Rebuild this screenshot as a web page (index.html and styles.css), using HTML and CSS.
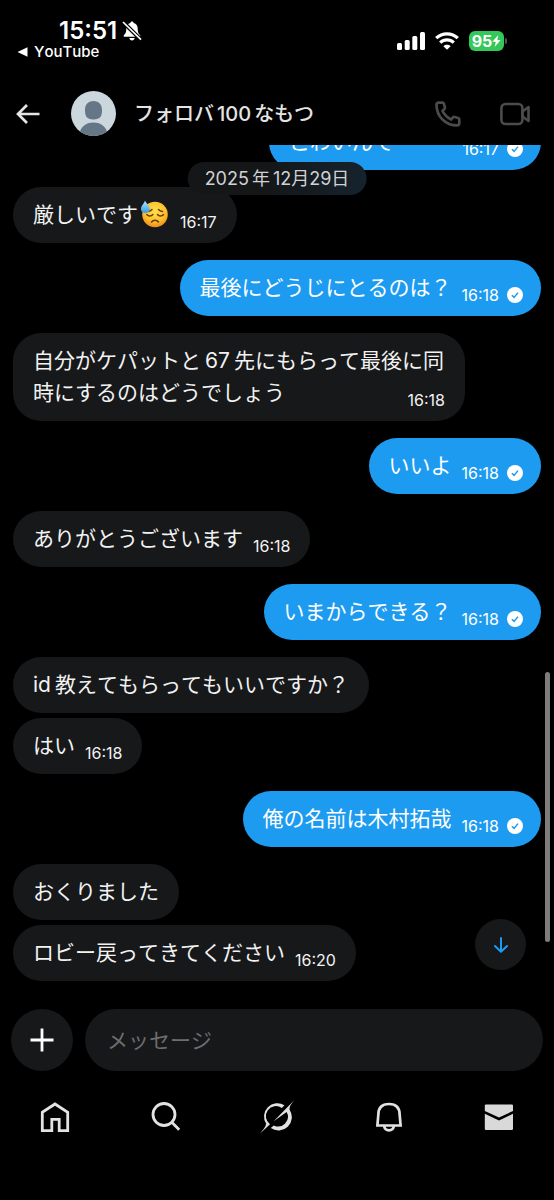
FILE: index.html
```html
<!DOCTYPE html>
<html lang="ja">
<head>
<meta charset="utf-8">
<meta name="viewport" content="width=device-width, initial-scale=1">
<title>フォロバ100なもつ</title>
<link rel="stylesheet" href="styles.css">
</head>
<body>
<svg width="0" height="0" class="defs" aria-hidden="true">
  <symbol id="check" viewBox="0 0 16 16"><circle cx="8" cy="8" r="8" fill="#fff"/><path d="M4.900 8.200 7.100 10.400 11 5.600" fill="none" stroke="#1d9bf0" stroke-width="1.500"/></symbol>
</svg>
<div class="app">
  <div class="status">
    <div class="status-left">
      <div class="clock">15:51
        <svg width="20" height="20" viewBox="0 0 20 20" aria-label="消音"><path d="M10 .6c1 0 1.600.6 1.700 1.500 2.700.7 4 2.800 4 5.300 0 4 .9 5.100 2.300 6.500.6.700.3 1.900-.7 1.900H2.700c-1 0-1.300-1.200-.7-1.900C3.400 12.500 4.300 11.400 4.300 7.400c0-2.500 1.300-4.600 4-5.300C8.400 1.200 9 .6 10 .6zM7.300 17h5.400c-.3 1.500-1.300 2.400-2.700 2.400S7.600 18.500 7.300 17z" fill="#fff"/><path d="M1.500 1.500 18.800 18.500" stroke="#000" stroke-width="4"/><path d="M1 1 19 18.700" stroke="#fff" stroke-width="1.700"/></svg>
      </div>
      <a class="back-app" href="#"><svg width="11" height="10" viewBox="0 0 11 10"><path d="M.5 5 10.500.3v9.400z" fill="#fff"/></svg>YouTube</a>
    </div>
    <div class="status-right">
      <svg width="28" height="18" viewBox="0 0 28 18" fill="#fff" aria-label="電波"><rect y="11" width="5" height="7" rx="1.500"/><rect x="7.700" y="8" width="5" height="10" rx="1.500"/><rect x="15.300" y="4" width="5" height="14" rx="1.500"/><rect x="23" width="5" height="18" rx="1.500"/></svg>
      <svg width="24" height="18" viewBox="0 0 24 18" fill="none" stroke="#fff" stroke-width="3.200" aria-label="Wi-Fi"><path d="M1.200 6.200C7.200.3 16.800.3 22.800 6.200"/><path d="M5.200 10.600c3.900-3.700 9.700-3.700 13.600 0"/><path d="M12 17.800 8.400 14.200c2-1.900 5.200-1.900 7.200 0z" fill="#fff" stroke="none"/></svg>
      <div class="battery"><span>95</span><svg width="9" height="12" viewBox="0 0 9 12"><path d="M6.300 0 .3 6.700h3.500L2.600 12 8.700 4.900H5.300z" fill="#fff"/></svg></div>
    </div>
  </div>

  <header class="header">
    <button class="icon-btn" aria-label="戻る"><svg width="24" height="20" viewBox="0 0 24 20" fill="none" stroke="#e4e4e4" stroke-width="2.700"><path d="M11 1 2 10l9 9M2 10h21.500"/></svg></button>
    <svg class="avatar" width="45" height="45" viewBox="0 0 45 45" aria-label="プロフィール画像"><clipPath id="av"><circle cx="22.500" cy="22.500" r="22.500"/></clipPath><g clip-path="url(#av)"><path fill="#ccd6dd" d="M0 0h45v45H0z"/><path d="M22.500 10c5.500 0 8.500 3.500 8.500 9 0 6-1.500 9.500-8.500 9.500S14 25 14 19c0-5.500 3-9 8.500-9zM8 45c1-9 6.500-13.500 14.500-13.500S36 36 37 45z" fill="#657786"/></g></svg>
    <h1 class="title">フォロバ<span class="latin-gap">100</span>なもつ</h1>
    <button class="icon-btn" aria-label="通話"><svg width="26" height="26" viewBox="0 0 26 26" fill="none" stroke="#4b4b4b" stroke-width="2.700" stroke-linejoin="round"><path d="M3.600 1.700h3.800c.8 0 1.300.4 1.500 1.100l1 3.600c.2.700 0 1.300-.6 1.800L7.500 9.800c1.900 3.900 4.800 6.800 8.700 8.700l1.700-2c.5-.5 1.100-.7 1.700-.5l3.600 1c.7.2 1.100.8 1.100 1.500v3.800c0 1.200-1 2.100-2.200 2.100C10.500 24.400 1.600 15.500 1.500 3.900c0-1.200.9-2.200 2.100-2.200z"/></svg></button>
    <button class="icon-btn" aria-label="ビデオ通話"><svg width="30" height="24" viewBox="0 0 30 24" fill="none" stroke="#4b4b4b" stroke-width="2.600" stroke-linejoin="round"><rect x="1.400" y="2" width="21" height="20" rx="4"/><path d="M22.500 9.500 28.500 5v14l-6-4.500z"/></svg></button>
  </header>

  <main class="chat">
    <div class="messages">
      <div class="bubble sent wide"><p>こわいんで</p><time>16:17</time><svg class="check"><use href="#check"/></svg></div>
      <div class="bubble"><p>厳しいです<svg class="emoji" viewBox="0 0 28 28" aria-label="😓"><defs><radialGradient id="face" cx=".5" cy=".35" r=".65"><stop offset="0" stop-color="#ffe04a"/><stop offset=".65" stop-color="#fdc02c"/><stop offset="1" stop-color="#ee8b18"/></radialGradient><linearGradient id="drop" x2="0" y2="1"><stop stop-color="#b5e8ff"/><stop offset="1" stop-color="#2f9be8"/></linearGradient></defs><circle cx="15" cy="14.500" r="12.800" fill="url(#face)"/><g fill="none" stroke="#6b3a10" stroke-width="1.500" stroke-linecap="round"><path d="M6.800 14.500c1.500 2 4.500 2 6 0M17.500 14.500c1.500 2 4.500 2 6 0M11.500 22c1.800-2.500 5.200-2.500 7 0M8 11.500c1.500-.2 3-.9 4-2M22.500 11.500c-1.500-.2-3-.9-4-2"/></g><path d="M5 .5c1 3 4.700 5 4.700 8.500 0 2.500-2 4-4.400 4S1 11.500 1 9C1 5.500 4.500 3.500 5 .5z" fill="url(#drop)"/></svg></p><time>16:17</time></div>
      <div class="bubble sent"><p>最後にどうじにとるのは？</p><time>16:18</time><svg class="check"><use href="#check"/></svg></div>
      <div class="bubble multiline"><p>自分がケパットと<span class="latin">67</span>先にもらって最後に同時にするのはどうでしょう<time>16:18</time></p></div>
      <div class="bubble sent"><p>いいよ</p><time>16:18</time><svg class="check"><use href="#check"/></svg></div>
      <div class="bubble"><p>ありがとうございます</p><time>16:18</time></div>
      <div class="bubble sent"><p>いまからできる？</p><time>16:18</time><svg class="check"><use href="#check"/></svg></div>
      <div class="bubble"><p>id<span class="after-latin">教</span>えてもらってもいいですか？</p></div>
      <div class="bubble grouped"><p>はい</p><time>16:18</time></div>
      <div class="bubble sent"><p>俺の名前は木村拓哉</p><time>16:18</time><svg class="check"><use href="#check"/></svg></div>
      <div class="bubble"><p>おくりました</p></div>
      <div class="bubble grouped"><p>ロビー戻ってきてください</p><time>16:20</time></div>
    </div>
    <div class="date-pill">2025<span class="latin-gap">年</span>12月29日</div>
    <div class="scroll-thumb"></div>
    <button class="to-bottom" aria-label="最新へ"><svg width="14" height="16" viewBox="0 0 14 16" fill="none" stroke="#1d9bf0" stroke-width="2" stroke-linecap="round" stroke-linejoin="round"><path d="M7 1v13.500M1 9l6 5.700L13 9"/></svg></button>
  </main>

  <form class="composer">
    <button type="button" class="add" aria-label="追加"><svg width="24" height="24" viewBox="0 0 24 24" stroke="#fff" stroke-width="2.800"><path d="M12 .5v23M.5 12h23"/></svg></button>
    <input class="field" type="text" placeholder="メッセージ" aria-label="メッセージ">
  </form>

  <nav class="tabs">
    <a href="#" aria-label="ホーム"><svg width="30" height="32" viewBox="0 0 30 32" fill="none" stroke="#e2e2e2" stroke-width="2.800"><path d="M2.300 11.200 15 3l12.700 8.200v18.500h-8.500V18.400h-7.400v11.300H2.300z"/></svg></a>
    <a href="#" aria-label="検索"><svg width="30" height="32" viewBox="0 0 30 32" fill="none" stroke="#e2e2e2" stroke-width="2.800"><circle cx="13" cy="13.500" r="11"/><path d="m20.800 21.300 7.400 7.400"/></svg></a>
    <a href="#" aria-label="Grok"><svg width="36" height="36" viewBox="0 0 36 36" fill="#e2e2e2"><path d="M25.500 6.300A13.300 13.300 0 0 0 7.200 24.800C6.800 28 3.500 31.500.8 34.800L11 25.200A9.700 9.700 0 0 1 22.800 9z"/><path d="M35.200 1.200 14.700 22.200 27.600 13A9.700 9.700 0 0 1 14.800 26.400L11.800 29A13.300 13.300 0 0 0 30.600 10.800C30 8 32 5 35.200 1.200z"/></svg></a>
    <a href="#" aria-label="通知"><svg width="30" height="32" viewBox="0 0 30 32" fill="none" stroke="#e2e2e2" stroke-width="2.700"><path d="M5.300 14C5.300 6.500 9.500 3 16 3s10.700 3.500 10.700 11l.9 10.500H4.400zM11 25c.7 3 2.400 4.300 5 4.300s4.300-1.300 5-4.300"/></svg></a>
    <a href="#" aria-label="メッセージ"><svg width="30" height="32" viewBox="0 0 30 32" fill="#d9d9d9"><path d="M2 3.500h26q1 0 1 1v5.500L15 16.500.8 10V4.500q0-1 1.200-1z"/><path d="M.8 12.800 15 19.400l14-6.600v14.900q0 1.300-1.300 1.300H2.100q-1.300 0-1.300-1.300z"/></svg></a>
  </nav>
</div>
</body>
</html>
```
FILE: styles.css
```css
* { box-sizing: border-box; }
body {
  margin: 0;
  background: #000;
  color: #f2f2f2;
  font-family: Inter, "Noto Sans CJK JP", sans-serif;
  font-kerning: none;
}
p, h1 { margin: 0; }
button { border: 0; padding: 0; background: none; font: inherit; color: inherit; }
a { color: inherit; text-decoration: none; }
svg { display: block; flex: none; }
.defs { position: absolute; }

.app { display: flex; flex-direction: column; height: 100vh; }

.status {
  display: flex;
  justify-content: space-between;
  align-items: flex-start;
  padding: 18px 50px 0 17px;
}
.clock {
  display: flex;
  align-items: center;
  gap: 5px;
  padding-left: 42px;
  font-size: 24px;
  line-height: 26px;
  font-weight: 600;
  color: #fff;
}
.back-app {
  display: flex;
  align-items: center;
  gap: 6px;
  font-size: 15px;
  line-height: 16px;
  font-weight: 500;
  color: #fff;
}
.status-right { display: flex; align-items: center; gap: 10px; padding-top: 13px; }
.battery {
  position: relative;
  display: flex;
  align-items: center;
  justify-content: center;
  width: 35px;
  height: 20px;
  border-radius: 6px;
  background: #34c759;
  color: #fff;
  font-size: 16px;
  font-weight: 700;
}
.battery::after {
  content: "";
  position: absolute;
  left: 36px;
  top: 7px;
  width: 2px;
  height: 6px;
  border-radius: 0 2px 2px 0;
  background: #555;
}

.header {
  display: flex;
  align-items: center;
  padding: 31px 24px 9px 16px;
}
.icon-btn { display: flex; justify-content: center; align-items: center; }
.avatar { margin-left: 31px; }
.title {
  flex: 1;
  margin-left: 18px;
  font-size: 20px;
  line-height: 24px;
  font-weight: 500;
  color: #e4e4e4;
}
.title + .icon-btn { margin-right: 39px; }

.chat {
  position: relative;
  flex: 1;
  min-height: 0;
  overflow: hidden;
  display: flex;
  flex-direction: column;
  justify-content: flex-end;
}
.messages {
  display: flex;
  flex-direction: column;
  align-items: flex-start;
  padding: 0 13px 28px;
}
.bubble {
  display: flex;
  align-items: flex-end;
  gap: 10px;
  max-width: 452px;
  margin-top: 17px;
  padding: 12px 20px;
  border-radius: 28px;
  background: #16181a;
  font-size: 21px;
  line-height: 32px;
}
.bubble.grouped { margin-top: 5px; }
.bubble.sent {
  align-self: flex-end;
  padding-right: 18px;
  background: #1d9bf0;
  color: #fff;
}
.bubble.wide { min-width: 272px; }
.wide time { margin-left: auto; }
.bubble time { font-size: 16px; line-height: 18px; }
.multiline time { float: right; margin-top: 14px; }
.check { width: 16px; height: 18px; margin-left: -2px; }
.emoji { display: inline-block; width: 28px; height: 28px; margin: 0 2px; vertical-align: -6px; }
.latin { margin: 0 4px; }
.after-latin { margin-left: 4px; }
.latin-gap { margin: 0 3px; }

.date-pill {
  position: absolute;
  top: 17px;
  left: 50%;
  transform: translateX(-50%);
  padding: 0 17px;
  border-radius: 17px;
  background: linear-gradient(90deg, #141617 40%, #15232e);
  color: #d0d3d5;
  font-size: 18px;
  line-height: 33px;
  white-space: nowrap;
}
.scroll-thumb {
  position: absolute;
  right: 4px;
  bottom: 67px;
  width: 5px;
  height: 270px;
  border-radius: 3px;
  background: #7d7d7d;
}
.to-bottom {
  position: absolute;
  right: 28px;
  bottom: 39px;
  display: flex;
  align-items: center;
  justify-content: center;
  width: 51px;
  height: 51px;
  border-radius: 50%;
  background: #16181a;
}

.composer { display: flex; gap: 12px; padding: 0 11px; }
.add {
  display: flex;
  flex: none;
  align-items: center;
  justify-content: center;
  width: 62px;
  height: 62px;
  border-radius: 50%;
  background: #16181a;
}
.field {
  flex: 1;
  min-width: 0;
  height: 62px;
  padding: 0 22px;
  border: 0;
  border-radius: 31px;
  outline: 0;
  background: #16181a;
  color: #fff;
  font: inherit;
  font-size: 21px;
}
.field::placeholder { color: #6c6e70; opacity: 1; }

.tabs { display: flex; padding: 28px 0 65px; }
.tabs a { display: flex; flex: 1; height: 36px; align-items: center; justify-content: center; }
```
